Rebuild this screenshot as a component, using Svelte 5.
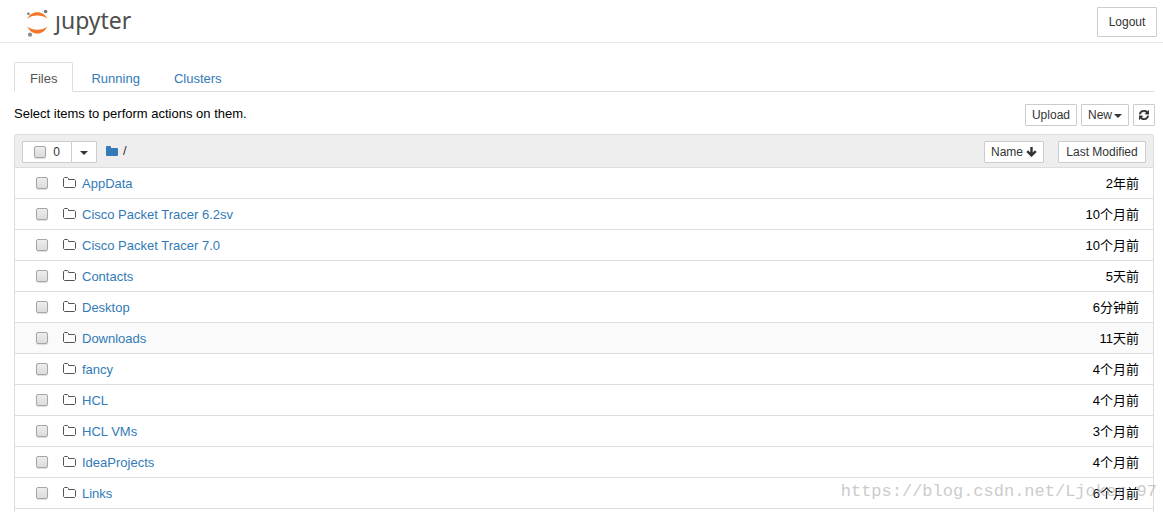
<script>
  const tabs = ['Files', 'Running', 'Clusters'];
  let active = $state('Files');
  const items = [
    ['AppData', '2年前'],
    ['Cisco Packet Tracer 6.2sv', '10个月前'],
    ['Cisco Packet Tracer 7.0', '10个月前'],
    ['Contacts', '5天前'],
    ['Desktop', '6分钟前'],
    ['Downloads', '11天前'],
    ['fancy', '4个月前'],
    ['HCL', '4个月前'],
    ['HCL VMs', '3个月前'],
    ['IdeaProjects', '4个月前'],
    ['Links', '6个月前']
  ];
  let selected = $state([]);
</script>

<header>
  <a class="logo" href="#home" aria-label="jupyter">
    <svg width="24" height="30" viewBox="0 0 24 30" aria-hidden="true">
      <path d="M1.400 11.800C3.200 7.400 7 5.200 11.300 5.200s8.100 2.200 9.900 6.600C18.600 9.600 15.200 8.500 11.300 8.500s-7.300 1.100-9.900 3.300Z" fill="#f37726" />
      <path d="M1.400 19.400C4 21.600 7.400 22.700 11.300 22.700s7.300-1.100 9.900-3.300C19.400 23.800 15.600 26.400 11.300 26.400S3.200 23.800 1.400 19.400Z" fill="#f37726" />
      <circle cx="2.400" cy="6.700" r="1.300" fill="#757575" />
      <circle cx="19.600" cy="4.500" r="1.800" fill="#757575" />
      <circle cx="4" cy="27.700" r="2.100" fill="#8c8c8c" />
    </svg>
    <span class="word">ȷupyter</span>
  </a>
  <button class="btn logout">Logout</button>
</header>

<main>
  <nav>
    {#each tabs as tab}
      <a href={'#' + tab.toLowerCase()} class:active={active === tab} onclick={() => (active = tab)}>{tab}</a>
    {/each}
  </nav>

  <div class="toolbar">
    <span class="hint">Select items to perform actions on them.</span>
    <div class="actions">
      <button class="btn">Upload</button>
      <button class="btn">New<span class="caret"></span></button>
      <button class="btn refresh" aria-label="Refresh">
        <svg width="10" height="10" viewBox="0 0 1536 1536" aria-hidden="true">
          <path fill="#333" stroke="#333" stroke-width="60" d="M1511 928q0 5-1 7-64 268-268 434.500T764 1536q-146 0-282.500-55T238 1324l-129 129q-19 19-45 19t-45-19-19-45V960q0-26 19-45t45-19h448q26 0 45 19t19 45-19 45l-137 137q71 66 161 102t187 36q134 0 250-65t186-179q11-17 53-117 8-23 30-23h192q13 0 22.500 9.500t9.500 22.500zm25-800v448q0 26-19 45t-45 19h-448q-26 0-45-19t-19-45 19-45l138-138Q969 256 768 256q-134 0-250 65T332 500q-11 17-53 117-8 23-30 23H50q-13 0-22.500-9.500T18 608v-7q65-268 270-434.500T768 0q146 0 284 55.500T1297 212l130-129q19-19 45-19t45 19 19 45z" />
        </svg>
      </button>
    </div>
  </div>

  <section class="list">
    <div class="head">
      <div class="group">
        <label class="btn pick"><input type="checkbox" aria-label="Select all" />{selected.length}</label>
        <button class="btn drop" aria-label="Selection menu"><span class="caret"></span></button>
      </div>
      <div class="crumbs">
        <a href="#root" aria-label="Root folder">
          <svg width="12" height="12" viewBox="0 0 12 12" aria-hidden="true">
            <path fill="#337ab7" d="M0 2Q0 1 1 1h3q1 0 1 1v1h6q1 0 1 1v6q0 1-1 1H1q-1 0-1-1Z" />
          </svg>
        </a>
        <span>/</span>
      </div>
      <div class="sorts">
        <button class="btn name">Name
          <svg width="11" height="10" viewBox="0 0 11 10" aria-hidden="true">
            <path d="M5.500 0V8M1.200 4.200l4.300 4.200 4.300-4.200" fill="none" stroke="#333" stroke-width="2.400" />
          </svg>
        </button>
        <button class="btn modified">Last Modified</button>
      </div>
    </div>
    {#each items as [name, time]}
      <div class="row" class:hovered={name === 'Downloads'}>
        <input type="checkbox" aria-label={'Select ' + name} value={name} bind:group={selected} />
        <svg width="13" height="12" viewBox="0 0 13 12" aria-hidden="true">
          <path d="M.5 1.500L1.500.5H4.500L5.500 1.500V2.500H11.500L12.500 3.500V9.500L11.500 10.500H1.500L.5 9.500Z" fill="none" stroke="#555" />
        </svg>
        <a href={'#' + name}>{name}</a>
        <time>{time}</time>
      </div>
    {/each}
  </section>
</main>
<div class="watermark">https://blog.csdn.net/Ljoker_97</div>

<style>
  :global(body) {
    background: #fff;
    color: #000;
    font: 13px/20px "Liberation Sans", Arial, "Noto Sans CJK SC", sans-serif;
    height: 100vh;
    overflow: hidden;
  }
  * { box-sizing: border-box; }
  a { color: #337ab7; text-decoration: none; }
  header {
    display: flex;
    align-items: center;
    justify-content: space-between;
    height: 43px;
    padding: 1px 6px 0 26px;
    border-bottom: 1px solid #e7e7e7;
  }
  .logo { display: flex; align-items: center; gap: 5px; }
  .word {
    color: #4e4e4e;
    font: 23px/30px "Noto Sans", "Open Sans", sans-serif;
    padding-bottom: 4px;
  }
  .btn {
    display: inline-flex;
    align-items: center;
    justify-content: center;
    height: 22px;
    margin: 0;
    padding: 0 6px;
    background: #fff;
    border: 1px solid #ccc;
    border-radius: 1px;
    color: #333;
    font: 12px/18px "Liberation Sans", Arial, sans-serif;
  }
  .logout { min-width: 60px; height: 30px; }
  .caret {
    border: 4px solid transparent;
    border-top-color: #333;
    border-bottom: 0;
    margin: 2px 0 0 2px;
  }
  main { padding: 19px 9px 0 14px; }
  nav {
    display: flex;
    gap: 2px;
    height: 30px;
    border-bottom: 1px solid #ddd;
  }
  nav a {
    height: 30px;
    padding: 6px 15px 0;
    border: 1px solid transparent;
    border-radius: 2px 2px 0 0;
  }
  nav a.active {
    color: #555;
    background: #fff;
    border-color: #ddd #ddd #fff;
  }
  .toolbar {
    display: flex;
    justify-content: space-between;
    margin-right: -1px;
    padding: 12px 0 8px;
  }
  .actions { display: flex; gap: 4px; }
  .refresh { width: 22px; padding: 0; }
  .list {
    padding-bottom: 20px;
    border: 1px solid #ddd;
    border-radius: 2px 2px 0 0;
  }
  .head {
    display: flex;
    align-items: center;
    height: 32px;
    padding: 2px 7px 0;
    background: #eee;
  }
  .group { display: flex; }
  .pick { width: 50px; gap: 7px; border-radius: 1px 0 0 1px; }
  .drop { width: 26px; margin-left: -1px; }
  .drop .caret { margin-left: 0; }
  .crumbs { display: flex; gap: 5px; margin-left: 9px; padding-bottom: 3px; color: #333; }
  .crumbs svg { display: block; margin-top: 4px; }
  .sorts { display: flex; gap: 14px; margin-left: auto; }
  .sorts svg { margin-left: 3px; }
  .name { min-width: 60px; padding: 0 5px; }
  .modified { min-width: 88px; }
  .row {
    display: flex;
    align-items: center;
    height: 31px;
    padding: 0 14px 0 21px;
    border-top: 1px solid #ddd;
  }
  .row:last-child { height: 32px; border-bottom: 1px solid #ddd; }
  .row svg { margin: 0 6px 0 15px; }
  .row a, time { padding-top: 2px; }
  .hovered { background: #fafafa; }
  time { margin-left: auto; }
  input {
    appearance: none;
    flex: none;
    width: 12px;
    height: 12px;
    margin: 0;
    border: 1px solid #a6a6a6;
    border-radius: 2px;
    background: linear-gradient(#ededed, #dcdcdc);
    box-shadow: 0 1px 1px #ddd;
  }
  input:checked { background: #337ab7; }
  .watermark {
    position: absolute;
    right: 6px;
    bottom: 8px;
    color: #999;
    opacity: 0.5;
    font: 17px/24px "Liberation Mono", monospace;
    pointer-events: none;
  }
</style>
